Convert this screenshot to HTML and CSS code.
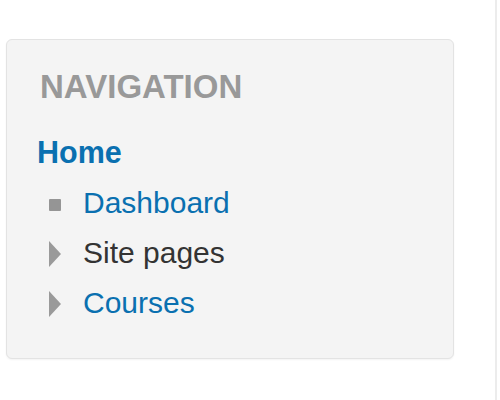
FILE: index.html
```html
<!DOCTYPE html>
<html lang="en">
<head>
<meta charset="utf-8">
<title>Navigation</title>
<link rel="stylesheet" href="styles.css">
</head>
<body>
<div class="page">
  <section class="block">
    <h2 class="block-title">NAVIGATION</h2>
    <ul class="nav">
      <li class="nav-home"><a href="#">Home</a></li>
      <li class="nav-item">
        <span class="icon"><span class="bullet"></span></span>
        <a href="#">Dashboard</a>
      </li>
      <li class="nav-item">
        <span class="icon"><svg class="tri" viewBox="0 0 12 26" width="12" height="26"><polygon points="0,0 12,13 0,26"/></svg></span>
        <span class="plain">Site pages</span>
      </li>
      <li class="nav-item">
        <span class="icon"><svg class="tri" viewBox="0 0 12 26" width="12" height="26"><polygon points="0,0 12,13 0,26"/></svg></span>
        <a href="#">Courses</a>
      </li>
    </ul>
  </section>
</div>
</body>
</html>
```
FILE: styles.css
```css
html, body {
  margin: 0;
  padding: 0;
  background: #ffffff;
}
body {
  font-family: "Liberation Sans", Arial, sans-serif;
}
.page {
  box-sizing: border-box;
  width: 497px;
  height: 400px;
  border-right: 2px solid #ececec;
  padding: 39px 0 0 6px;
}
.block {
  box-sizing: border-box;
  width: 448px;
  height: 320px;
  background: #f4f4f4;
  border: 1px solid #e3e3e3;
  border-radius: 6px;
  box-shadow: 0 1px 2px rgba(0, 0, 0, 0.05);
  padding: 29px 0 0 30px;
}
.block-title {
  margin: 0 0 22px 0;
  padding-left: 3px;
  font-size: 33px;
  line-height: 36px;
  font-weight: bold;
  color: #999999;
}
.nav {
  list-style: none;
  margin: 0;
  padding: 0;
}
.nav li {
  font-size: 30px;
  line-height: 50px;
}
.nav a {
  color: #0a70b0;
  text-decoration: none;
}
.nav-home a {
  font-weight: bold;
  font-size: 30.5px;
}
.nav-item {
  display: flex;
  align-items: center;
  gap: 22px;
  padding-left: 11px;
}
.icon {
  width: 13px;
  display: flex;
  align-items: center;
  justify-content: center;
}
.bullet {
  display: block;
  width: 12px;
  height: 12px;
  margin-top: 3px;
  background: #959595;
  border-radius: 1px;
}
.tri {
  display: block;
  fill: #9a9a9a;
  margin-top: 2px;
}
.plain {
  color: #333333;
}
```
